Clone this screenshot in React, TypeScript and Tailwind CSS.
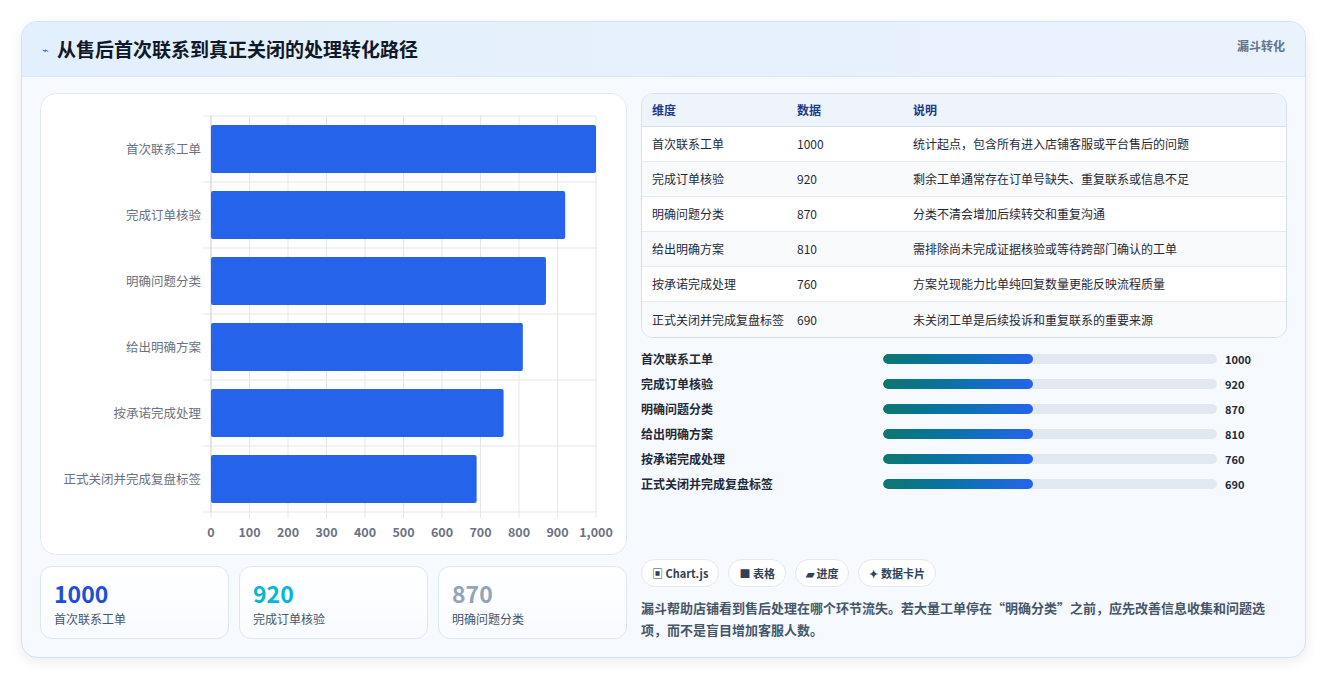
import React from "react";

const rows = [
  ["首次联系工单", 1000, "统计起点，包含所有进入店铺客服或平台售后的问题"],
  ["完成订单核验", 920, "剩余工单通常存在订单号缺失、重复联系或信息不足"],
  ["明确问题分类", 870, "分类不清会增加后续转交和重复沟通"],
  ["给出明确方案", 810, "需排除尚未完成证据核验或等待跨部门确认的工单"],
  ["按承诺完成处理", 760, "方案兑现能力比单纯回复数量更能反映流程质量"],
  ["正式关闭并完成复盘标签", 690, "未关闭工单是后续投诉和重复联系的重要来源"],
] as const;

const font = { fontFamily: '"Noto Sans CJK SC","Noto Sans",sans-serif' };

function Chart() {
  const x0 = 170, w = 385, y0 = 22, rh = 66;
  return (
    <svg width="585" height="460" className="block">
      {Array.from({ length: 11 }).map((_, i) => (
        <g key={i}>
          <line x1={x0 + (w * i) / 10} x2={x0 + (w * i) / 10} y1={y0} y2={y0 + rh * 6 + 6} stroke="#e5e7eb" />
          <text x={x0 + (w * i) / 10} y={y0 + rh * 6 + 25} textAnchor="middle" fontSize="12.5" fill="#6b7280" fontWeight="600">
            {i === 10 ? "1,000" : i * 100}
          </text>
        </g>
      ))}
      {Array.from({ length: 7 }).map((_, i) => (
        <line key={i} x1={x0 - 8} x2={x0 + w} y1={y0 + rh * i} y2={y0 + rh * i} stroke="#e5e7eb" />
      ))}
      <line x1={x0} x2={x0} y1={y0} y2={y0 + rh * 6} stroke="#d1d5db" />
      {rows.map(([l, v], i) => (
        <g key={l}>
          <rect x={x0} y={y0 + rh * i + 9} width={(w * v) / 1000} height={48} rx={2} fill="#2563eb" />
          <text x={x0 - 10} y={y0 + rh * i + 38} textAnchor="end" fontSize="12.5" fill="#6b7280">{l}</text>
        </g>
      ))}
    </svg>
  );
}

export default function App() {
  return (
    <div className="w-[1327px] h-[679px] bg-white pt-[21px] px-[21px]" style={font}>
      <div className="h-[637px] rounded-2xl border border-[#cfe3f3] bg-[#f6fafe] overflow-hidden shadow-[0_4px_14px_rgba(15,23,42,0.08)]">
        <div className="h-[55px] bg-gradient-to-r from-[#e2effc] to-[#eaf2fd] border-b border-[#d8e6f5] flex items-center justify-between px-5">
          <div className="flex items-center gap-2">
            <span className="text-[#2563eb] text-[11px]">⌁</span>
            <span className="text-[19px] font-bold text-[#111827]">从售后首次联系到真正关闭的处理转化路径</span>
          </div>
          <span className="text-[12px] font-bold text-[#64748b] self-start mt-[15px]">漏斗转化</span>
        </div>
        <div className="flex gap-[14px] px-[18px] pt-[16px]">
          <div className="w-[587px] flex flex-col gap-[11px]">
            <div className="h-[462px] rounded-2xl border border-[#e2e8f0] bg-white overflow-hidden">
              <Chart />
            </div>
            <div className="grid grid-cols-3 gap-[10px]">
              {[["1000", "text-[#1d4ed8]", "首次联系工单"], ["920", "text-[#06b6d4]", "完成订单核验"], ["870", "text-[#94a3b8]", "明确问题分类"]].map(([n, c, l]) => (
                <div key={n} className="h-[73px] rounded-xl border border-[#dbe7f3] bg-gradient-to-b from-white to-[#f8fbff] px-[13px] pt-[11px]">
                  <div className={`text-[23px] font-bold leading-[30px] ${c}`}>{n}</div>
                  <div className="text-[12px] text-[#475569] mt-[2px]">{l}</div>
                </div>
              ))}
            </div>
          </div>
          <div className="w-[648px] flex flex-col">
            <div className="rounded-xl border border-[#d5e0ec] overflow-hidden bg-white">
              <div className="flex h-[33px] items-center bg-[#eef4fc] border-b border-[#d5e0ec] text-[12px] font-bold text-[#1e3a8a]">
                <div className="w-[155px] pl-[10px]">维度</div><div className="w-[116px]">数据</div><div>说明</div>
              </div>
              {rows.map(([l, v, d], i) => (
                <div key={l} className={`flex h-[35px] items-center text-[12px] text-[#1f2937] ${i < 5 ? "border-b border-[#e5ebf2]" : ""} ${i % 2 ? "bg-[#f8fafc]" : "bg-white"}`}>
                  <div className="w-[155px] pl-[10px]">{l}</div><div className="w-[116px]">{v}</div><div>{d}</div>
                </div>
              ))}
            </div>
            <div className="flex flex-col gap-[7px] mt-[12px]">
              {rows.map(([l, v]) => (
                <div key={l} className="flex items-center h-[18px] text-[12px] font-semibold text-[#1f2937]">
                  <div className="w-[242px]">{l}</div>
                  <div className="w-[334px] h-[10px] rounded-full bg-[#e2e8f0] overflow-hidden">
                    <div className="h-full w-[45%] rounded-full bg-gradient-to-r from-[#0f766e] to-[#2563eb]" />
                  </div>
                  <div className="ml-[8px] text-[11px] font-bold">{v}</div>
                </div>
              ))}
            </div>
            <div className="flex gap-[9px] mt-[66px]">
              {["▣ Chart.js", "■ 表格", "▰ 进度", "✦ 数据卡片"].map((t) => (
                <span key={t} className="h-[28px] px-[10px] rounded-full border border-[#e2e8f0] bg-white text-[11px] font-semibold text-[#334155] flex items-center">{t}</span>
              ))}
            </div>
            <p className="mt-[10px] text-[13px] leading-[22px] font-semibold text-[#475569]">
              漏斗帮助店铺看到售后处理在哪个环节流失。若大量工单停在“明确分类”之前，应先改善信息收集和问题选项，而不是盲目增加客服人数。
            </p>
          </div>
        </div>
      </div>
    </div>
  );
}
